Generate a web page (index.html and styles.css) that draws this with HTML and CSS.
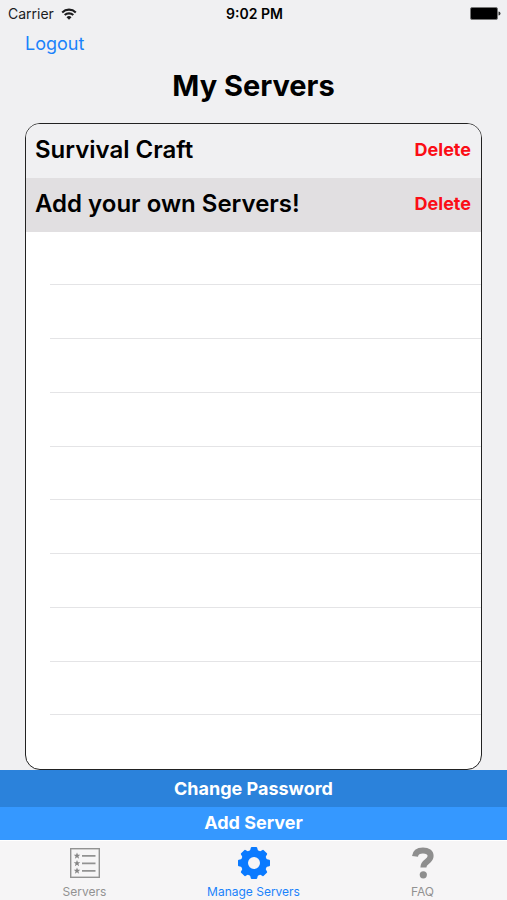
FILE: index.html
```html
<!DOCTYPE html>
<html lang="en">
<head>
<meta charset="utf-8">
<meta name="viewport" content="width=device-width, initial-scale=1">
<title>My Servers</title>
<link rel="stylesheet" href="styles.css">
</head>
<body>
<div class="status">
  <div class="carrier">
    <span>Carrier</span>
    <svg class="wifi" viewBox="0 0 16 12" aria-hidden="true">
      <g fill="none" stroke="#1c1c1e" stroke-width="2.1">
        <path d="M1.2 4.4a9.8 9.8 0 0 1 13.6 0"/>
        <path d="M3.7 7.1a6.2 6.2 0 0 1 8.6 0"/>
      </g>
      <path d="M8 11.8 5.5 9.2a3.6 3.6 0 0 1 5 0z" fill="#1c1c1e"/>
    </svg>
  </div>
  <time class="clock">9:02 PM</time>
  <svg class="battery" viewBox="0 0 31 13" aria-hidden="true">
    <rect x="0.5" y="0.5" width="27" height="12" rx="1.5" fill="#000" stroke="#777"/>
    <path d="M28.5 4.5q2 0 2 2t-2 2z" fill="#333"/>
  </svg>
</div>
<header class="header">
  <a class="logout" href="#">Logout</a>
  <h1 class="title">My Servers</h1>
</header>
<main class="main">
  <ul class="list">
    <li class="row row-light"><span class="name">Survival Craft</span><button class="delete" type="button">Delete</button></li>
    <li class="row row-dark"><span class="name">Add your own Servers!</span><button class="delete" type="button">Delete</button></li>
    <li class="row empty"></li>
    <li class="row empty"></li>
    <li class="row empty"></li>
    <li class="row empty"></li>
    <li class="row empty"></li>
    <li class="row empty"></li>
    <li class="row empty"></li>
    <li class="row empty"></li>
    <li class="row empty"></li>
    <li class="row"></li>
  </ul>
</main>
<div class="actions">
  <button class="action change" type="button">Change Password</button>
  <button class="action add" type="button">Add Server</button>
</div>
<nav class="tabs">
  <a class="tab" href="#">
    <svg class="icon" viewBox="0 0 34 34" aria-hidden="true">
      <rect x="2.7" y="2.7" width="28.6" height="28.6" fill="none" stroke="#929292" stroke-width="1.4"/>
      <path d="M14 9.8h13.5M14 17.3h13.5M14 24.8h13.5" stroke="#929292" stroke-width="1.7"/>
      <defs><path id="star" d="M0-3.4.9-1.1 3.3-1 1.4.5 2.1 2.9 0 1.5-2.1 2.9-1.4.5-3.3-1-.9-1.1z" fill="#858585"/></defs>
      <use href="#star" x="9" y="9.8"/><use href="#star" x="9" y="17.3"/><use href="#star" x="9" y="24.8"/>
    </svg>
    <span>Servers</span>
  </a>
  <a class="tab active" href="#" aria-current="page">
    <svg class="icon" viewBox="0 0 34 34" aria-hidden="true">
      <defs><path id="tooth" d="M-4.3-11-3.2-15.2Q-3-16-2.2-16H2.2Q3-16 3.2-15.2L4.3-11z" fill="#0a7aff"/></defs>
      <g transform="translate(17 17)">
        <circle r="9.6" fill="none" stroke="#0a7aff" stroke-width="7.2"/>
        <use href="#tooth"/>
        <use href="#tooth" transform="rotate(45)"/>
        <use href="#tooth" transform="rotate(90)"/>
        <use href="#tooth" transform="rotate(135)"/>
        <use href="#tooth" transform="rotate(180)"/>
        <use href="#tooth" transform="rotate(225)"/>
        <use href="#tooth" transform="rotate(270)"/>
        <use href="#tooth" transform="rotate(315)"/>
      </g>
    </svg>
    <span>Manage Servers</span>
  </a>
  <a class="tab" href="#">
    <svg class="icon" viewBox="0 0 34 34" aria-hidden="true">
      <path d="M9 10.4C9.4 6.4 12.4 4.4 17 4.4c4.900 0 7.600 2.300 7.600 5.600 0 2.900-1.600 4.200-3.800 5.700-2.300 1.600-3.400 2.700-3.400 5.900" fill="none" stroke="#8e8e8e" stroke-width="6"/>
      <circle cx="17.300" cy="28.800" r="3.600" fill="#8e8e8e"/>
    </svg>
    <span>FAQ</span>
  </a>
</nav>
</body>
</html>
```
FILE: styles.css
```css
* {
  box-sizing: border-box;
}

body {
  margin: 0;
  min-height: 100vh;
  display: flex;
  flex-direction: column;
  background: #f0f0f2;
  color: #000;
  font-family: Inter, "Liberation Sans", sans-serif;
}

a {
  text-decoration: none;
}

button {
  border: 0;
  padding: 0;
  background: none;
  font: inherit;
  cursor: pointer;
}

.status {
  display: grid;
  grid-template-columns: 1fr auto 1fr;
  align-items: center;
  height: 27px;
  padding: 0 6px 0 8px;
  font-size: 14px;
  color: #1c1c1e;
}

.carrier {
  display: flex;
  align-items: center;
  gap: 7px;
}

.wifi {
  width: 16px;
  height: 12px;
}

.clock {
  font-weight: 600;
  color: #000;
}

.battery {
  justify-self: end;
  width: 31px;
  height: 13px;
}

.header {
  padding: 5px 25px 0;
}

.logout {
  display: inline-block;
  font-size: 18px;
  line-height: 24px;
  color: #1a82fb;
}

.title {
  margin: 8px 0 15px;
  font-size: 29px;
  line-height: 44px;
  font-weight: 700;
  text-align: center;
}

.main {
  flex: 1;
  display: flex;
  padding: 0 25px;
}

.list {
  flex: 1;
  display: grid;
  grid-auto-rows: 1fr;
  margin: 0;
  padding: 0;
  list-style: none;
  overflow: hidden;
  border: 1px solid #222;
  border-radius: 15px;
  background: #fff;
}

.row {
  display: flex;
  align-items: center;
  justify-content: space-between;
  padding: 0 10px 2px 9px;
}

.row-light {
  background: #f0f0f2;
}

.row-dark {
  background: #e1dfe1;
}

.empty {
  margin-left: 24px;
  border-bottom: 1px solid #e4e4e6;
}

.name {
  font-size: 24px;
  font-weight: 600;
}

.delete {
  font-size: 18px;
  font-weight: 700;
  color: #fb0d16;
}

.actions {
  display: flex;
  flex-direction: column;
}

.action {
  font-size: 18px;
  font-weight: 700;
  color: #fff;
}

.change {
  height: 37px;
  background: #2b82db;
}

.add {
  height: 33px;
  padding-bottom: 3px;
  background: #3598ff;
}

.tabs {
  display: grid;
  grid-template-columns: repeat(3, 1fr);
  height: 60px;
  border-top: 1px solid #fff;
  background: #f6f5f6;
}

.tab {
  display: flex;
  flex-direction: column;
  align-items: center;
  padding-top: 5px;
  gap: 4px;
  font-size: 12px;
  line-height: 16px;
  color: #929292;
}

.active {
  color: #1a82fb;
}

.icon {
  width: 34px;
  height: 34px;
}
```
